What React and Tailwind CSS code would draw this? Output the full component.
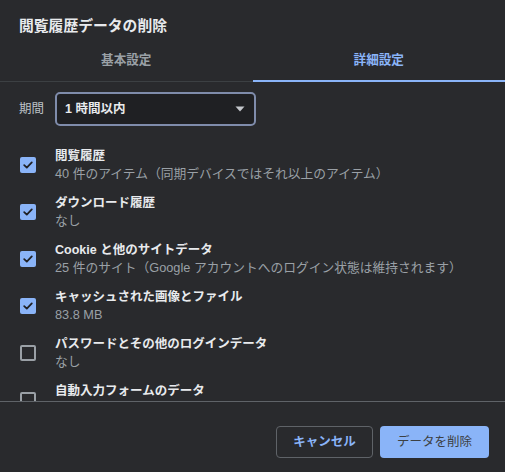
import React from "react";

const font = { fontFamily: '"Liberation Sans", "Noto Sans CJK JP", sans-serif' };

function Check({ checked }) {
  if (checked) {
    return (
      <div className="w-[16px] h-[16px] rounded-[2px] bg-[#8ab4f8] flex items-center justify-center shrink-0">
        <svg width="12" height="12" viewBox="0 0 12 12">
          <path d="M2.2 6.2 L4.8 8.6 L9.8 3.4" fill="none" stroke="#202124" strokeWidth="1.8" strokeLinecap="round" strokeLinejoin="round" />
        </svg>
      </div>
    );
  }
  return <div className="w-[16px] h-[16px] rounded-[2px] border-2 border-[#9aa0a6] shrink-0" />;
}

const rows = [
  { t: "閲覧履歴", s: "40 件のアイテム（同期デバイスではそれ以上のアイテム）", c: true },
  { t: "ダウンロード履歴", s: "なし", c: true },
  { t: "Cookie と他のサイトデータ", s: "25 件のサイト（Google アカウントへのログイン状態は維持されます）", c: true },
  { t: "キャッシュされた画像とファイル", s: "83.8 MB", c: true },
  { t: "パスワードとその他のログインデータ", s: "なし", c: false },
  { t: "自動入力フォームのデータ", s: "", c: false },
];

export default function App() {
  return (
    <div className="w-[505px] h-[472px] bg-[#292a2d] flex flex-col overflow-hidden" style={font}>
      <div className="h-[40px] pt-[16px] px-[19px] text-[14.8px] leading-[20px] font-bold text-[#e8eaed]">
        閲覧履歴データの削除
      </div>
      <div className="flex">
        <div className="flex-1 flex flex-col">
          <div className="h-[40px] flex items-center justify-center text-[12.6px] text-[#9aa0a6] font-bold">基本設定</div>
          <div className="h-[2px] border-b border-[#3c4043]" />
        </div>
        <div className="flex-1 flex flex-col">
          <div className="h-[40px] flex items-center justify-center text-[12.6px] text-[#8ab4f8] font-bold">詳細設定</div>
          <div className="h-[2px] bg-[#8ab4f8]" />
        </div>
      </div>
      <div className="flex-1 overflow-hidden">
        <div className="pt-[10px] flex items-center">
          <div className="w-[55px] pl-[19px] text-[12.5px] text-[#bdc1c6]">期間</div>
          <div className="w-[201px] h-[34px] rounded-[5px] border-2 border-[#7f8cab] bg-[#1f2023] flex items-center justify-between pl-[8px] pr-[9px]">
            <span className="text-[12.5px] text-[#e8eaed] font-bold">1 時間以内</span>
            <svg width="10" height="6" viewBox="0 0 10 6">
              <path d="M0.5 0.5 L9.5 0.5 L5 5.5 Z" fill="#c4c7cc" />
            </svg>
          </div>
        </div>
        <div className="mt-[15px] flex flex-col">
          {rows.map((r, i) => (
            <div key={i} className="h-[47px] flex items-center pl-[20px] shrink-0">
              <Check checked={r.c} />
              <div className="ml-[19px] flex flex-col">
                <div className="text-[12.5px] leading-[18px] text-[#e8eaed] font-bold">{r.t}</div>
                <div className="text-[12.75px] leading-[18px] text-[#9aa0a6]">{r.s || "\u00a0"}</div>
              </div>
            </div>
          ))}
        </div>
      </div>
      <div className="h-[71px] border-t border-[#5f6368] flex justify-end items-start pt-[24px] pr-[16px] gap-[7px]">
        <button className="w-[97px] h-[32px] rounded-[4px] border border-[#5f6368] text-[12.5px] font-bold text-[#8ab4f8] flex items-center justify-center">
          キャンセル
        </button>
        <button className="w-[109px] h-[32px] rounded-[4px] bg-[#8ab4f8] text-[12.5px] text-[#3c4043] flex items-center justify-center">
          データを削除
        </button>
      </div>
    </div>
  );
}
